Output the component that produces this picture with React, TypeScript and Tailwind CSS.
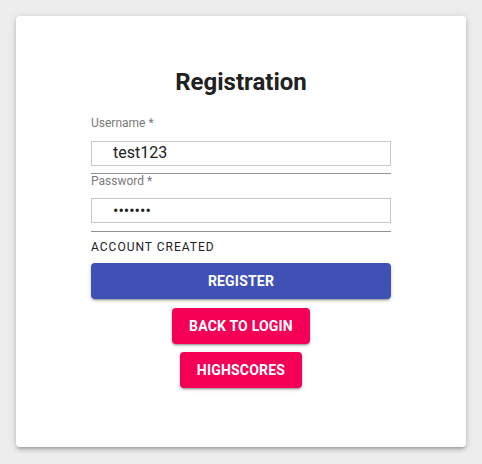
import React from "react";

export default function App() {
  return (
    <div
      className="min-h-[464px] w-full bg-[#ededed] pt-4 px-4"
      style={{ fontFamily: "Roboto, 'Liberation Sans', sans-serif" }}
    >
      <div className="w-[450px] h-[431px] bg-white rounded-[4px] shadow-[0px_3px_3px_-2px_rgba(0,0,0,0.2),0px_3px_4px_0px_rgba(0,0,0,0.14),0px_1px_8px_0px_rgba(0,0,0,0.12)]">
        <div className="w-[300px] mx-auto pt-[54px] flex flex-col">
          <h1 className="text-[24px] leading-[24px] font-bold text-center text-[#212121]">
            Registration
          </h1>

          <label className="mt-[23px] text-[12px] leading-[12px] text-[#7a7a7a]">
            Username *
          </label>
          <input
            readOnly
            value="test123"
            className="mt-[12px] h-[25px] w-full border border-[#c8c8c8] pl-[21px] pb-[3px] text-[16px] text-[#212121] outline-none bg-white"
            style={{ fontFamily: "Roboto, sans-serif" }}
          />
          <div className="mt-[7px] h-px w-full bg-[#949494]" />

          <label className="mt-[1px] text-[12px] leading-[12px] text-[#7a7a7a]">
            Password *
          </label>
          <input
            readOnly
            type="password"
            value="1234567"
            className="mt-[11px] h-[25px] w-full border border-[#c8c8c8] pl-[21px] pb-[1px] text-[16px] text-[#212121] outline-none bg-white"
            style={{ fontFamily: "Roboto, sans-serif" }}
          />
          <div className="mt-[8px] h-px w-full bg-[#949494]" />

          <div className="mt-[9px] text-[12px] leading-[12px] tracking-[1px] uppercase text-[#212121]">
            Account created
          </div>

          <button className="mt-[10px] h-[36px] w-full rounded-[4px] bg-[#3f51b5] text-white text-[14px] font-bold tracking-[0.2px] uppercase shadow-[0px_3px_1px_-2px_rgba(0,0,0,0.2),0px_2px_2px_0px_rgba(0,0,0,0.14),0px_1px_5px_0px_rgba(0,0,0,0.12)]">
            Register
          </button>
          <div className="flex flex-col items-center">
            <button className="mt-[9px] h-[36px] w-[138px] rounded-[4px] bg-[#f50057] text-white text-[14px] font-bold tracking-[0.2px] uppercase shadow-[0px_3px_1px_-2px_rgba(0,0,0,0.2),0px_2px_2px_0px_rgba(0,0,0,0.14),0px_1px_5px_0px_rgba(0,0,0,0.12)]">
              Back to Login
            </button>
            <button className="mt-[8px] h-[36px] w-[122px] rounded-[4px] bg-[#f50057] text-white text-[14px] font-bold tracking-[0.2px] uppercase shadow-[0px_3px_1px_-2px_rgba(0,0,0,0.2),0px_2px_2px_0px_rgba(0,0,0,0.14),0px_1px_5px_0px_rgba(0,0,0,0.12)]">
              Highscores
            </button>
          </div>
        </div>
      </div>
    </div>
  );
}
